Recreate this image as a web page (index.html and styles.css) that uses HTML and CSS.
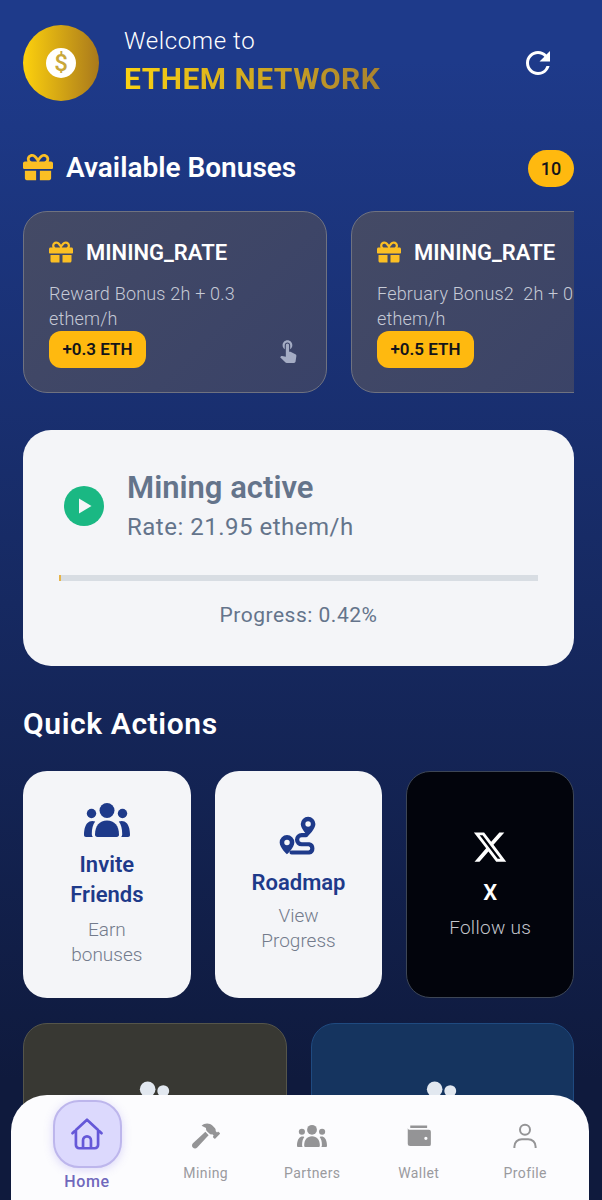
FILE: index.html
```html
<!DOCTYPE html>
<html lang="en">
<head>
<meta charset="UTF-8" />
<meta name="viewport" content="width=device-width, initial-scale=1" />
<title>Ethem Network</title>
<link rel="stylesheet" href="styles.css">
</head>
<body>

<svg class="defs" width="0" height="0" aria-hidden="true">
  <symbol id="gift" viewBox="0 0 512 512">
    <path d="M32 448c0 17.7 14.3 32 32 32h160V320H32v128zm256 32h160c17.7 0 32-14.3 32-32V320H288v160zm192-320h-42.1c6.2-12.1 10.1-25.5 10.1-40 0-48.5-39.5-88-88-88-41.6 0-68.5 21.3-103 68.3-34.5-47-61.4-68.3-103-68.3-48.5 0-88 39.5-88 88 0 14.5 3.8 27.9 10.1 40H32c-17.7 0-32 14.3-32 32v80c0 8.8 7.2 16 16 16h480c8.8 0 16-7.2 16-16v-80c0-17.7-14.3-32-32-32zm-326.1 0c-22.1 0-40-17.9-40-40s17.9-40 40-40c19.9 0 34.6 3.3 86.1 80h-86.1zm206.1 0h-87.6c51.4-76.5 65.7-80 87.6-80 22.1 0 40 17.9 40 40s-17.9 40-40 40z"/>
  </symbol>
  <symbol id="groups" viewBox="0 0 46 34">
    <circle cx="23" cy="7.500" r="7.500"/>
    <circle cx="7.500" cy="10.500" r="4.700"/>
    <circle cx="38.500" cy="10.500" r="4.700"/>
    <path d="M11 31.500C11 23 15.500 17.500 23 17.500S35 23 35 31.500c0 1.500-.8 2.500-2.500 2.500h-19C11.800 34 11 33 11 31.500z"/>
    <path d="M5.500 18.500C1.500 20.500 0 26 0 32c0 1.300.7 2 2 2h6.800C8 33 7.800 32 7.800 31c0-5 1-9.500 3.400-12.500-1.800-.7-3.800-.8-5.700 0z"/>
    <path d="M40.500 18.500C44.500 20.500 46 26 46 32c0 1.300-.7 2-2 2h-6.800c.8-1 1-2 1-3 0-5-1-9.500-3.400-12.500 1.800-.7 3.800-.8 5.700 0z"/>
  </symbol>
  <symbol id="touch" viewBox="0 0 24 24">
    <path d="M9 11.24V7.5C9 6.12 10.12 5 11.5 5S14 6.12 14 7.5v3.74c1.21-.81 2-2.18 2-3.74C16 5.01 13.99 3 11.5 3S7 5.01 7 7.5c0 1.56.79 2.93 2 3.74zm9.84 4.63l-4.54-2.26c-.17-.07-.35-.11-.54-.11H13v-6c0-.83-.67-1.5-1.5-1.5S10 6.67 10 7.5v10.74l-3.43-.72c-.08-.01-.15-.03-.24-.03-.31 0-.59.13-.79.33l-.79.8 4.94 4.94c.27.27.65.44 1.06.44h6.79c.75 0 1.33-.55 1.44-1.28l.75-5.27c.01-.07.02-.14.02-.2 0-.62-.38-1.16-.91-1.38z"/>
  </symbol>
  <symbol id="people" viewBox="0 0 48 48">
    <circle cx="16" cy="9" r="8.5"/>
    <circle cx="33" cy="11" r="6.5"/>
    <path d="M2 34c0-9 6-14 14-14s14 5 14 14v3H2zM33 20c8 0 13 5 13 13v4H33v-5c0-4-1-8-4-11 1-1 2-1 4-1z"/>
  </symbol>
</svg>

<div class="page">

  <header class="top">
    <div class="coin"><span class="coin-inner">$</span></div>
    <div class="top-text">
      <div class="welcome">Welcome to</div>
      <div class="brand">ETHEM NETWORK</div>
    </div>
    <svg class="refresh" viewBox="0 0 24 24"><path d="M17.65 6.35A7.958 7.958 0 0 0 12 4c-4.42 0-7.99 3.58-7.99 8s3.57 8 7.99 8c3.73 0 6.84-2.55 7.73-6h-2.08A5.99 5.99 0 0 1 12 18c-3.31 0-6-2.69-6-6s2.69-6 6-6c1.66 0 3.14.69 4.22 1.78L13 11h7V4l-2.35 2.35z"/></svg>
  </header>

  <section class="bonus-head">
    <svg class="gift-big"><use href="#gift"/></svg>
    <h2>Available Bonuses</h2>
    <span class="count">10</span>
  </section>

  <div class="bonus-row">
    <div class="bonus">
      <div class="bonus-title"><svg class="gift-small"><use href="#gift"/></svg>MINING_RATE</div>
      <p class="bonus-desc">Reward Bonus 2h + 0.3 ethem/h</p>
      <div class="bonus-foot">
        <span class="pill">+0.3 ETH</span>
        <svg class="touch"><use href="#touch"/></svg>
      </div>
    </div>
    <div class="bonus">
      <div class="bonus-title"><svg class="gift-small"><use href="#gift"/></svg>MINING_RATE</div>
      <p class="bonus-desc">February Bonus2&nbsp; 2h + 0.5 ethem/h</p>
      <div class="bonus-foot">
        <span class="pill">+0.5 ETH</span>
        <svg class="touch"><use href="#touch"/></svg>
      </div>
    </div>
  </div>

  <section class="mining">
    <div class="mining-top">
      <div class="play"><svg viewBox="0 0 24 24"><path d="M7 4.500v15L19.500 12z"/></svg></div>
      <div>
        <div class="mining-title">Mining active</div>
        <div class="mining-rate">Rate: 21.95 ethem/h</div>
      </div>
    </div>
    <div class="bar"><div class="bar-fill" style="width:0.42%"></div></div>
    <div class="progress-text">Progress: 0.42%</div>
  </section>

  <h2 class="quick-title">Quick Actions</h2>

  <div class="quick-grid">
    <div class="action">
      <svg class="groups-icon"><use href="#groups"/></svg>
      <div class="action-name">Invite Friends</div>
      <div class="action-sub">Earn bonuses</div>
    </div>
    <div class="action action-route">
      <svg class="route-icon" viewBox="0 0 24 24">
        <path fill-rule="evenodd" d="M17.500 1.500a4 4 0 0 0-4 4c0 2.800 4 6.500 4 6.500s4-3.700 4-6.500a4 4 0 0 0-4-4zm0 2.500a1.500 1.500 0 1 1 0 3 1.500 1.500 0 0 1 0-3zM6 11.500a4 4 0 0 0-4 4c0 2.800 4 6.500 4 6.500s4-3.700 4-6.500a4 4 0 0 0-4-4zm0 2.500a1.500 1.500 0 1 1 0 3 1.500 1.500 0 0 1 0-3z"/>
        <path class="route" d="M16.500 11.500H14a2.500 2.500 0 0 0 0 5h4a2.300 2.300 0 0 1 0 4.500H8.500"/>
      </svg>
      <div class="action-name">Roadmap</div>
      <div class="action-sub">View Progress</div>
    </div>
    <div class="action action-x">
      <svg class="x-icon" viewBox="0 0 24 24"><path d="M18.244 2.250h3.308l-7.227 8.260 8.502 11.240H16.170l-5.214-6.817L4.990 21.750H1.680l7.730-8.835L1.254 2.250H8.080l4.713 6.231zm-1.161 17.520h1.833L7.084 4.126H5.117z"/></svg>
      <div class="action-name">X</div>
      <div class="action-sub">Follow us</div>
    </div>
  </div>

  <div class="wide-grid">
    <div class="wide wide-gold"><svg class="wide-icon"><use href="#people"/></svg></div>
    <div class="wide wide-blue"><svg class="wide-icon"><use href="#people"/></svg></div>
  </div>

</div>

<nav class="nav">
  <a class="nav-item active">
    <span class="home-box">
      <svg class="home-icon" viewBox="0 0 24 24"><path class="line" d="M2.800 11.500 12 3l9.200 8.500M5 9.500V19a2 2 0 0 0 2 2h10a2 2 0 0 0 2-2V9.500M9.500 21v-5a2.500 2.500 0 0 1 5 0v5"/></svg>
    </span>
    <span>Home</span>
  </a>
  <a class="nav-item">
    <svg class="nav-icon hammer" viewBox="0 0 576 512"><path d="M571.310 193.940l-22.630-22.630c-6.250-6.250-16.380-6.250-22.630 0l-11.310 11.310-28.900-28.900c5.630-21.310.36-44.900-16.350-61.610l-45.250-45.250c-62.480-62.480-163.790-62.480-226.280 0l90.510 45.250v18.750c0 16.970 6.740 33.250 18.750 45.250l49.140 49.140c16.710 16.710 40.300 21.980 61.610 16.350l28.900 28.900-11.310 11.310c-6.250 6.250-6.250 16.380 0 22.630l22.630 22.630c6.250 6.250 16.380 6.250 22.630 0l90.510-90.510c6.230-6.240 6.230-16.370-.02-22.620zm-286.720-15.200c-3.700-3.700-6.840-7.790-9.850-11.950L19.640 404.960c-25.570 23.880-26.260 64.190-1.530 88.930s65.050 24.050 88.930-1.530l238.130-255.070c-3.960-2.910-7.900-5.900-11.440-9.440l-49.140-49.140z"/></svg>
    <span>Mining</span>
  </a>
  <a class="nav-item">
    <svg class="nav-icon"><use href="#groups"/></svg>
    <span>Partners</span>
  </a>
  <a class="nav-item">
    <svg class="nav-icon" viewBox="0 0 24 24"><path fill-rule="evenodd" d="M5 3.500h13.500v2H5zM5 7h15a1.500 1.500 0 0 1 1.500 1.500v10A1.500 1.500 0 0 1 20 20H5a2 2 0 0 1-2-2V5.500C3 6.500 4 7 5 7zm12.500 5.500a1.300 1.300 0 1 0 0 2.600 1.300 1.300 0 0 0 0-2.600z"/></svg>
    <span>Wallet</span>
  </a>
  <a class="nav-item">
    <svg class="nav-icon" viewBox="0 0 24 24"><circle class="line-grey" cx="12" cy="7" r="4"/><path class="line-grey" d="M3.500 21.500v-1a6 6 0 0 1 6-6h5a6 6 0 0 1 6 6v1"/></svg>
    <span>Profile</span>
  </a>
</nav>

</body>
</html>
```

FILE: styles.css
```css
* {
  box-sizing: border-box;
}
html, body {
  height: 1200px;
  margin: 0;
  overflow: hidden;
}
body {
  background: linear-gradient(180deg, #1e3a8a 5%, #0f1a3d 90%);
  color: white;
  font-family: Roboto, "Noto Sans", sans-serif;
  position: relative;
}
.defs {
  position: absolute;
}
.page {
  padding: 25px 28px 0 23px;
}

/* header */
.top {
  display: flex;
  align-items: center;
  height: 76px;
}
.coin {
  width: 76px;
  height: 76px;
  border-radius: 50%;
  background: linear-gradient(90deg, #fdd10d 0%, #a9791c 100%);
  display: flex;
  align-items: center;
  justify-content: center;
  flex: none;
}
.coin-inner {
  width: 30px;
  height: 30px;
  border-radius: 50%;
  background: white;
  color: #c9a73a;
  font-size: 24px;
  font-weight: 500;
  line-height: 30px;
  text-align: center;
}
.top-text {
  margin: -2px 0 0 25px;
  flex: 1;
}
.welcome {
  font-size: 24px;
  font-weight: 300;
  line-height: 30px;
  letter-spacing: 0.6px;
}
.brand {
  font-size: 30px;
  font-weight: 700;
  line-height: 38px;
  letter-spacing: 0.5px;
  margin-top: 4px;
  width: 258px;
  background: linear-gradient(90deg, #fbd212, #a9822f);
  -webkit-background-clip: text;
  background-clip: text;
  color: transparent;
}
.refresh {
  width: 36px;
  height: 36px;
  fill: white;
  margin-right: 18px;
}

/* bonuses */
.bonus-head {
  display: flex;
  align-items: center;
  margin-top: 49px;
  height: 37px;
}
.gift-big {
  width: 30px;
  height: 30px;
  fill: #fbbf24;
  flex: none;
  margin-bottom: 3px;
}
.bonus-head h2 {
  margin: 0 0 3px 13px;
  font-size: 28px;
  font-weight: 600;
  flex: 1;
}
.count {
  width: 46px;
  height: 37px;
  border-radius: 19px;
  background: #ffb90f;
  color: #14141a;
  font-size: 18px;
  font-weight: 500;
  line-height: 37px;
  text-align: center;
}
.bonus-row {
  display: flex;
  gap: 24px;
  margin-top: 24px;
  overflow: hidden;
}
.bonus {
  flex: none;
  width: 304px;
  height: 182px;
  padding: 24px 25px 0;
  border: 1.5px solid #6f7280;
  border-radius: 24px;
  background: linear-gradient(135deg, #444a65, #394268);
}
.bonus-title {
  display: flex;
  align-items: center;
  gap: 13px;
  font-size: 22px;
  font-weight: 600;
  height: 32px;
}
.gift-small {
  width: 24px;
  height: 24px;
  fill: #fbbf24;
  flex: none;
}
.bonus-desc {
  margin: 13px 0 0;
  font-size: 18px;
  font-weight: 300;
  line-height: 25px;
  letter-spacing: 0.2px;
  color: #c6cad6;
  width: 250px;
}
.bonus-foot {
  display: flex;
  align-items: center;
  justify-content: space-between;
}
.pill {
  width: 97px;
  height: 37px;
  border-radius: 12px;
  background: #ffb90f;
  color: #14141a;
  font-size: 17px;
  font-weight: 600;
  line-height: 37px;
  text-align: center;
}
.touch {
  width: 26px;
  height: 26px;
  fill: #a4acc4;
}

/* mining card */
.mining {
  margin-top: 37px;
  height: 236px;
  padding: 37px 36px 0;
  border-radius: 28px;
  background: #f4f5f8;
  color: #64748b;
}
.mining-top {
  display: flex;
  align-items: center;
  padding-left: 5px;
  gap: 23px;
}
.play {
  width: 40px;
  height: 40px;
  border-radius: 50%;
  background: #1ab883;
  display: flex;
  align-items: center;
  justify-content: center;
  flex: none;
}
.play svg {
  width: 24px;
  height: 24px;
  fill: #f4f5f8;
}
.mining-title {
  font-size: 31px;
  font-weight: 600;
  line-height: 42px;
}
.mining-rate {
  font-size: 24px;
  line-height: 36px;
  letter-spacing: 0.5px;
}
.bar {
  height: 6px;
  margin-top: 30px;
  background: #d8dde3;
}
.bar-fill {
  height: 100%;
  min-width: 2px;
  background: #e6b44a;
}
.progress-text {
  margin-top: 20px;
  font-size: 21px;
  line-height: 28px;
  letter-spacing: 0.5px;
  text-align: center;
}

/* quick actions */
.quick-title {
  margin: 39px 0 0;
  font-size: 30px;
  font-weight: 600;
  line-height: 38px;
  letter-spacing: 0.6px;
}
.quick-grid {
  display: grid;
  grid-template-columns: repeat(3, 1fr);
  gap: 24px;
  margin-top: 28px;
  height: 227px;
}
.action {
  border-radius: 24px;
  background: #f4f5f8;
  color: #1e3a8a;
  display: flex;
  flex-direction: column;
  align-items: center;
  justify-content: center;
  text-align: center;
  padding: 0 36px;
}
.groups-icon {
  width: 46px;
  height: 34px;
  fill: #1e3a8a;
}
.route-icon {
  width: 44px;
  height: 44px;
  fill: #1e3a8a;
  margin-bottom: -3px;
}
.route {
  fill: none;
  stroke: #1e3a8a;
  stroke-width: 2.3;
  stroke-linecap: round;
}
.action-name {
  font-size: 22px;
  font-weight: 600;
  line-height: 30px;
  margin-top: 13px;
}
.action-sub {
  font-size: 19px;
  font-weight: 300;
  line-height: 25px;
  color: #737b8c;
  margin-top: 7px;
}
.action-route {
  padding-bottom: 3px;
}
.action-route .action-sub {
  margin-top: 5px;
}
.action-x {
  background: #02040c;
  border: 1.5px solid #3d4656;
  color: white;
}
.action-x .action-sub {
  color: #c2c5cc;
  letter-spacing: 0.3px;
}
.x-icon {
  width: 36px;
  height: 36px;
  fill: white;
}
.wide-grid {
  display: grid;
  grid-template-columns: repeat(2, 1fr);
  gap: 24px;
  margin-top: 25px;
}
.wide {
  height: 200px;
  border-radius: 24px;
  padding-top: 57px;
  text-align: center;
}
.wide-gold {
  background: #383833;
  border: 1.5px solid #55554a;
}
.wide-blue {
  background: #15345f;
  border: 1.5px solid #1f4a80;
}
.wide-icon {
  width: 44px;
  height: 44px;
  fill: #e2e8f0;
}

/* bottom nav, sits over the page */
.nav {
  position: absolute;
  left: 11px;
  right: 13px;
  bottom: 0;
  height: 105px;
  border-radius: 36px 36px 0 0;
  background: #fcfcfe;
  display: grid;
  grid-template-columns: 131px repeat(4, 106.5px);
  padding-left: 10.5px;
}
.nav-item {
  display: flex;
  flex-direction: column;
  align-items: center;
  color: #9a9a9e;
  font-size: 14px;
  letter-spacing: 0.4px;
  padding-top: 26px;
}
.nav-item span:last-child {
  margin-top: 14px;
}
.nav-icon {
  width: 30px;
  height: 30px;
  fill: #949496;
}
.hammer {
  width: 28px;
}
.home-icon {
  width: 38px;
  height: 38px;
}
.line {
  fill: none;
  stroke: #6558d8;
  stroke-width: 1.7;
  stroke-linecap: round;
  stroke-linejoin: round;
}
.line-grey {
  fill: none;
  stroke: #949496;
  stroke-width: 1.6;
}
.nav-item.active {
  color: #7068bc;
  font-size: 16px;
  font-weight: 500;
  letter-spacing: 0.7px;
  padding-top: 5px;
}
.nav-item.active span:last-child {
  margin-top: 4px;
}
.home-box {
  width: 69px;
  height: 68px;
  border-radius: 26px;
  background: #dcd9fd;
  border: 2px solid #bdb6ec;
  box-shadow: 0 2px 10px rgba(120, 105, 230, 0.25);
  display: flex;
  align-items: center;
  justify-content: center;
}
```
